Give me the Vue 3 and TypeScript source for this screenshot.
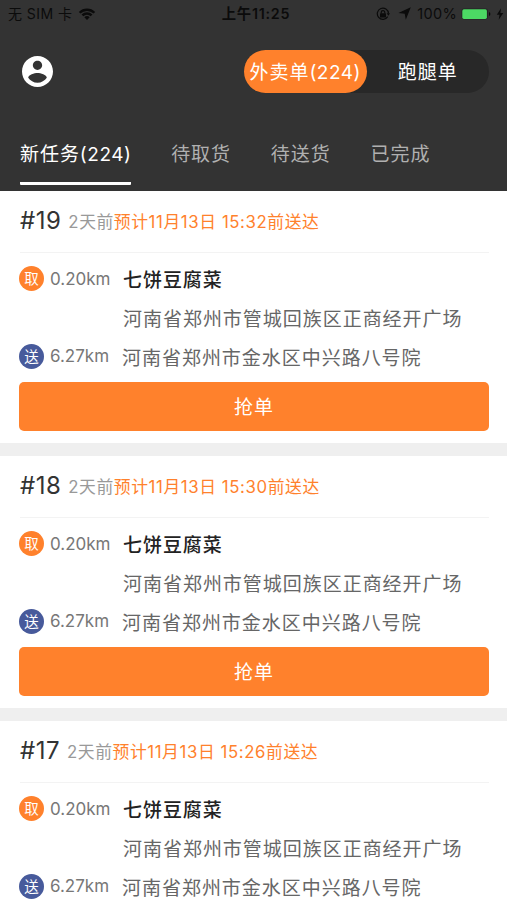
<script setup lang="ts">
import { ref } from 'vue'

interface Order {
  no: number
  posted: string
  date: string
  time: string
  shop: string
  pickup: string
  pickupKm: string
  dropoff: string
  dropoffKm: string
  open: boolean
}

const modes = ['外卖单', '跑腿单']
const tabs = ['新任务', '待取货', '待送货', '已完成']
const activeMode = ref(0)
const activeTab = ref(0)
const total = 224

const orders: Order[] = [
  { no: 19, time: '15:32', open: true },
  { no: 18, time: '15:30', open: true },
  { no: 17, time: '15:26', open: false },
].map((o) => ({
  ...o,
  posted: '2天前',
  date: '预计11月13日',
  shop: '七饼豆腐菜',
  pickup: '河南省郑州市管城回族区正商经开广场',
  pickupKm: '0.20km',
  dropoff: '河南省郑州市金水区中兴路八号院',
  dropoffKm: '6.27km',
}))
</script>

<template>
  <div class="screen">
    <header class="header">
      <div class="status">
        <div class="status-left">
          <span class="carrier">无 SIM 卡</span>
          <svg class="wifi" viewBox="0 0 17 12">
            <path d="M0.3 3.9 A11.6 11.6 0 0 1 16.7 3.9 L15 5.6 A9.2 9.2 0 0 0 2 5.6 Z" />
            <path d="M3 6.6 A7.8 7.8 0 0 1 14 6.6 L12.2 8.3 A5.3 5.3 0 0 0 4.8 8.3 Z" />
            <path d="M5.8 9.3 A3.9 3.9 0 0 1 11.2 9.3 L8.5 12 Z" />
          </svg>
        </div>
        <span class="clock">上午11:25</span>
        <div class="status-right">
          <svg class="lock" viewBox="0 0 14 14">
            <path class="line" d="M11.7 9.6 A5.6 5.6 0 1 1 12.5 6.4" />
            <path d="M10.7 6.3 H14 L12.4 8.8 Z" />
            <rect x="4" y="6.3" width="6" height="4.1" rx="0.5" />
            <path class="line" d="M5.2 6.6 V5.4 A1.8 1.8 0 0 1 8.8 5.4 V6.6" />
          </svg>
          <svg class="arrow" viewBox="0 0 12 12"><path d="M11.8 0.3 L7.2 11.8 L6.2 6.3 L0.3 5.6 Z" /></svg>
          <span class="percent">100%</span>
          <svg class="battery" viewBox="0 0 30 12">
            <rect class="shell" x="0.5" y="0.5" width="26.4" height="11" rx="2.4" />
            <rect class="charge" x="1.3" y="1.3" width="24.6" height="9.6" rx="1.6" />
            <path d="M28 4 Q29.4 4.6 29.4 6 Q29.4 7.4 28 8 Z" />
          </svg>
          <svg class="bolt" viewBox="0 0 8 12"><path d="M5 0.3 L0.8 6.8 H3.5 L2.7 11.7 L7.3 4.9 H4.4 Z" /></svg>
        </div>
      </div>

      <div class="topbar">
        <svg class="avatar" viewBox="2 2 20 20">
          <path
            d="M12 2C6.48 2 2 6.48 2 12s4.48 10 10 10 10-4.48 10-10S17.52 2 12 2zm0 3c1.66 0 3 1.34 3 3s-1.34 3-3 3-3-1.34-3-3 1.34-3 3-3zm0 14.2c-2.5 0-4.71-1.28-6-3.22.03-1.99 4-3.08 6-3.08 1.99 0 5.97 1.09 6 3.08-1.29 1.94-3.5 3.22-6 3.22z"
          />
        </svg>
        <div class="switch">
          <button
            v-for="(mode, i) in modes"
            :key="mode"
            class="mode"
            :class="{ on: activeMode === i }"
            @click="activeMode = i"
          >
            {{ mode }}<span v-if="i === 0" class="count">({{ total }})</span>
          </button>
        </div>
      </div>

      <nav class="tabs">
        <button
          v-for="(tab, i) in tabs"
          :key="tab"
          class="tab"
          :class="{ on: activeTab === i }"
          @click="activeTab = i"
        >
          {{ tab }}<span v-if="i === 0" class="count">({{ total }})</span>
        </button>
      </nav>
    </header>

    <main class="list">
      <article v-for="order in orders" :key="order.no" class="card">
        <div class="card-head">
          <span class="no">#{{ order.no }}</span>
          <span class="posted">{{ order.posted }}</span>
          <span class="due">{{ order.date }} {{ order.time }}前送达</span>
        </div>
        <div class="row">
          <i class="badge pick">取</i>
          <span class="km">{{ order.pickupKm }}</span>
          <strong class="shop">{{ order.shop }}</strong>
        </div>
        <div class="row">
          <span class="addr from">{{ order.pickup }}</span>
        </div>
        <div class="row">
          <i class="badge send">送</i>
          <span class="km">{{ order.dropoffKm }}</span>
          <span class="addr">{{ order.dropoff }}</span>
        </div>
        <button v-if="order.open" class="grab">抢单</button>
      </article>
    </main>
  </div>
</template>

<style>
body {
  margin: 0;
  overflow: hidden;
}
</style>

<style scoped>
.screen {
  width: 507px;
  height: 900px;
  overflow: hidden;
  background: #efefef;
  font-family: Inter, 'Noto Sans CJK SC', sans-serif;
  white-space: nowrap;
}
button {
  border: 0;
  padding: 0;
  margin: 0;
  background: none;
  font: inherit;
  color: inherit;
}
svg {
  display: block;
  flex: none;
}
.header {
  box-sizing: border-box;
  height: 190.5px;
  background: #333;
}
.status {
  display: grid;
  grid-template-columns: 1fr auto 1fr;
  align-items: center;
  height: 27px;
  padding: 0 3px 0 8px;
  color: #0b0b0b;
  fill: #0b0b0b;
  font-size: 14px;
  line-height: 27px;
}
.status-left,
.status-right {
  display: flex;
  align-items: center;
}
.carrier {
  letter-spacing: 0.45px;
}
.wifi {
  width: 18px;
  height: 12px;
  margin-left: 6px;
}
.clock {
  font-weight: 600;
  font-size: 14.3px;
  letter-spacing: 0.75px;
}
.status-right {
  justify-content: flex-end;
}
.lock {
  width: 14px;
  height: 14px;
}
.line {
  fill: none;
  stroke: #0b0b0b;
  stroke-width: 1.2;
}
.arrow {
  width: 13px;
  height: 13px;
  margin-left: 8px;
}
.percent {
  margin-left: 6px;
  font-size: 14.5px;
  letter-spacing: 0.3px;
}
.battery {
  width: 30px;
  height: 12px;
  margin-left: 4px;
}
.shell {
  fill: #222;
}
.charge {
  fill: #4cd964;
}
.bolt {
  width: 8px;
  height: 12px;
  margin-left: 5px;
}
.topbar {
  display: flex;
  align-items: center;
  justify-content: space-between;
  height: 88px;
  padding: 0 18px 0 22px;
}
.avatar {
  width: 31px;
  height: 31px;
  fill: #fff;
}
.switch {
  display: flex;
  width: 245px;
  height: 43px;
  border-radius: 22px;
  background: #282828;
}
.mode {
  flex: 1;
  border-radius: 22px;
  color: #fff;
  font-size: 19px;
  line-height: 45px;
  letter-spacing: 0.95px;
}
.mode.on {
  background: #ff812c;
}
.count {
  letter-spacing: 0.5px;
}
.tabs {
  display: flex;
  gap: 39.8px;
  padding: 7px 20px 0;
}
.tab {
  box-sizing: border-box;
  height: 62.5px;
  border-bottom: 3px solid transparent;
  border-radius: 1px;
  color: #b0b0b0;
  font-size: 19px;
  line-height: 66px;
  letter-spacing: 0.95px;
}
.tab.on {
  border-color: #fff;
  color: #fff;
}
.card {
  box-sizing: border-box;
  height: 252.5px;
  margin-bottom: 12.5px;
  padding: 0 18px 0 19px;
  background: #fff;
}
.card-head {
  display: flex;
  align-items: center;
  box-sizing: border-box;
  height: 62px;
  margin: 0 0 6.8px 1px;
  border-bottom: 1.5px solid #f3f3f3;
  line-height: 62px;
}
.no {
  color: #333;
  font-size: 24px;
  letter-spacing: 0.5px;
}
.posted {
  margin-left: 7px;
  padding-top: 1px;
  color: #999;
  font-size: 16.8px;
  letter-spacing: 0.55px;
}
.due {
  padding-top: 1px;
  color: #ff812c;
  font-size: 16.8px;
  letter-spacing: 0.6px;
}
.row {
  display: flex;
  align-items: center;
  height: 38.7px;
}
.badge {
  display: block;
  flex: none;
  width: 25px;
  height: 25px;
  border-radius: 50%;
  color: #fff;
  font-size: 14.5px;
  font-style: normal;
  line-height: 25px;
  text-align: center;
}
.pick {
  background: #ff812c;
}
.send {
  background: #475a9b;
}
.km {
  width: 72px;
  margin-left: 6px;
  color: #777;
  font-size: 17px;
}
.shop {
  margin-left: 1px;
  color: #222;
  font-size: 19px;
  font-weight: 500;
  letter-spacing: 0.95px;
}
.addr {
  color: #666;
  font-size: 19px;
  letter-spacing: 0.97px;
}
.from {
  margin-left: 104px;
}
.grab {
  display: block;
  width: 100%;
  height: 49px;
  margin-top: 6.7px;
  border-radius: 5px;
  background: #ff812c;
  color: #fff;
  font-size: 19px;
  line-height: 51px;
  letter-spacing: 0.95px;
}
</style>
